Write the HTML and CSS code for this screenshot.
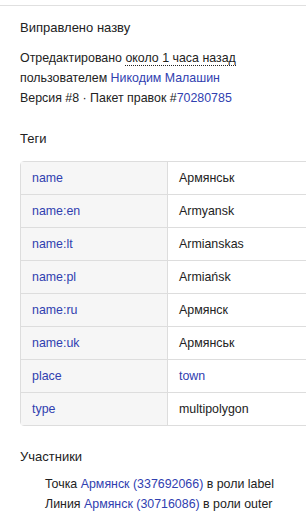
FILE: index.html
```html
<!DOCTYPE html>
<html>
  <head>
    <link rel="stylesheet" href="styles.css">
  </head>
  <body>
    <div class="browse-section">
      <h4 class="comment">Виправлено назву</h4>
      <div class="details">
        Отредактировано <abbr class="time">около 1 часа назад</abbr><br>
        пользователем <a href="#">Никодим Малашин</a><br>
        Версия #8 · Пакет правок #<a href="#">70280785</a>
      </div>
    </div>

    <div class="browse-section">
      <h4 class="tags-title">Теги</h4>
      <table class="tags">
        <tr><th><a href="#">name</a></th><td>Армянськ</td></tr>
        <tr><th><a href="#">name:en</a></th><td>Armyansk</td></tr>
        <tr><th><a href="#">name:lt</a></th><td>Armianskas</td></tr>
        <tr><th><a href="#">name:pl</a></th><td>Armiańsk</td></tr>
        <tr><th><a href="#">name:ru</a></th><td>Армянск</td></tr>
        <tr><th><a href="#">name:uk</a></th><td>Армянськ</td></tr>
        <tr><th><a href="#">place</a></th><td><a href="#">town</a></td></tr>
        <tr><th><a href="#">type</a></th><td>multipolygon</td></tr>
      </table>
    </div>

    <div class="browse-section">
      <h4 class="members-title">Участники</h4>
      <ul class="members">
        <li>Точка <a href="#">Армянск (337692066)</a> в роли label</li>
        <li>Линия <a href="#">Армянск (30716086)</a> в роли outer</li>
      </ul>
    </div>
  </body>
</html>
```

FILE: styles.css
```css
body {
  margin: 0;
  font-family: "Liberation Sans", Arial, sans-serif;
  font-size: 12.4px;
  color: #222;
  overflow: hidden;
}

a {
  color: #3040b0;
  text-decoration: none;
}

.browse-section {
  padding: 0 0 0 20px;
}

.browse-section:first-child {
  margin-top: 5px;
  border-top: 1px solid #e0e0e0;
  padding-top: 14px;
}

h4 {
  margin: 0 0 12px;
  font-size: 13px;
  font-weight: normal;
  line-height: 16px;
}

.details {
  line-height: 20px;
}

abbr.time {
  text-decoration: none;
  border-bottom: 1px dotted #222;
}

.browse-section + .browse-section {
  margin-top: 23px;
}

h4.tags-title {
  margin-bottom: 14px;
}

h4.members-title {
  margin-bottom: 9px;
}

.tags {
  width: 310px;
  border-collapse: separate;
  border-spacing: 0;
  border: 1px solid #ddd;
  border-radius: 4px;
  margin-bottom: 22px;
}

.tags th,
.tags td {
  height: 32px;
  padding: 0 11px;
  text-align: left;
  font-weight: normal;
  border-bottom: 1px solid #ddd;
}

.tags tr:last-child th,
.tags tr:last-child td {
  border-bottom: none;
}

.tags th {
  width: 124px;
  background: #f6f6f6;
  border-right: 1px solid #ddd;
}

.members {
  list-style: none;
  margin: 0;
  padding: 0 0 0 25px;
  line-height: 20px;
}
```
